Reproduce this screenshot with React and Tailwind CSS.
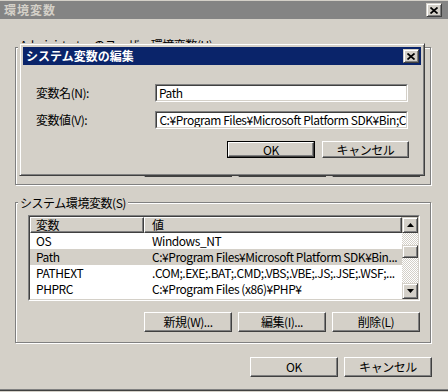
import React from "react";

function Raised({ className = "", children }) {
  return (
    <div
      className={`border border-t-white border-l-white border-r-[#404040] border-b-[#404040] shadow-[inset_-1px_-1px_0_#808080] bg-[#d4d0c8] flex items-center justify-center ${className}`}
    >
      {children}
    </div>
  );
}

function Button({ w = "w-[88px]", h = "h-[20px]", def = false, children }) {
  if (def) {
    return (
      <div className={`${w} ${h} border border-black flex`}>
        <Raised className="flex-1 text-[12px] leading-none">{children}</Raised>
      </div>
    );
  }
  return <Raised className={`${w} ${h} text-[12px] leading-none`}>{children}</Raised>;
}

function CloseGlyph() {
  return (
    <svg width="8" height="7" viewBox="0 0 8 7" className="block">
      <path d="M0.5 0.5L7.5 6.5M7.5 0.5L0.5 6.5" stroke="#000" strokeWidth="1.7" />
    </svg>
  );
}

function CloseBtn() {
  return (
    <div className="w-[16px] h-[14px] border border-t-[#d4d0c8] border-l-[#d4d0c8] border-r-[#404040] border-b-[#404040] shadow-[inset_1px_1px_0_#fff,inset_-1px_-1px_0_#808080] bg-[#d4d0c8] flex items-center justify-center">
      <CloseGlyph />
    </div>
  );
}

function ScrollBtn({ up }) {
  return (
    <div className="w-[16px] h-[16px] border border-t-[#d4d0c8] border-l-[#d4d0c8] border-r-[#404040] border-b-[#404040] shadow-[inset_1px_1px_0_#fff,inset_-1px_-1px_0_#808080] bg-[#d4d0c8] flex items-center justify-center">
      <svg width="7" height="4" viewBox="0 0 7 4" className="block">
        {up ? <path d="M3.5 0L7 4H0Z" fill="#000" /> : <path d="M0 0H7L3.5 4Z" fill="#000" />}
      </svg>
    </div>
  );
}

function Sunken({ className = "", inner = "", children }) {
  return (
    <div className={`border border-t-[#808080] border-l-[#808080] border-r-white border-b-white ${className}`}>
      <div className={`h-full border border-t-[#404040] border-l-[#404040] border-r-[#d4d0c8] border-b-[#d4d0c8] bg-white ${inner}`}>
        {children}
      </div>
    </div>
  );
}

const rows = [
  ["OS", "Windows_NT", false],
  ["Path", "C:¥Program Files¥Microsoft Platform SDK¥Bin...", true],
  ["PATHEXT", ".COM;.EXE;.BAT;.CMD;.VBS;.VBE;.JS;.JSE;.WSF;...", false],
  ["PHPRC", "C:¥Program Files (x86)¥PHP¥", false],
];

export default function App() {
  return (
    <div className="w-[448px] h-[392px] bg-[#d4d0c8] relative overflow-hidden font-['Noto_Sans_CJK_JP','Noto_Sans',sans-serif] text-[12px] tracking-[-0.45px] text-black">
      <div className="h-[391px] flex flex-col border-b border-b-[#404040] shadow-[inset_0_-1px_0_#808080]">
        {/* title bar */}
        <div className="mt-[1px] h-[18px] bg-[#848484] flex items-center justify-between pl-[4px] pr-[6px]">
          <span className="font-bold text-[#d4d0c8] text-[12px] leading-none tracking-[1px]">環境変数</span>
          <CloseBtn />
        </div>

        {/* user variables group (mostly hidden) */}
        <div className="ml-[15px] mt-[28px] w-[416px] h-[138px] relative border border-[#808080] shadow-[1px_1px_0_#fff,inset_1px_1px_0_#fff] flex flex-col justify-end pb-[7px]">
          <span className="absolute left-[2px] -top-[10px] px-[2px] bg-[#d4d0c8] leading-[14px] whitespace-nowrap">
            Administrator のユーザー環境変数(U)
          </span>
          <div className="ml-[12px] w-[392px] flex justify-end gap-[6px]">
            <Button>新規(N)...</Button>
            <Button>編集(E)...</Button>
            <Button>削除(D)</Button>
          </div>
        </div>

        {/* system variables group */}
        <div className="ml-[15px] mt-[17px] w-[416px] h-[141px] relative border border-[#808080] shadow-[1px_1px_0_#fff,inset_1px_1px_0_#fff] pl-[12px] pt-[12px]">
          <span className="absolute left-[2px] -top-[7px] px-[2px] bg-[#d4d0c8] leading-[14px] whitespace-nowrap">
            システム環境変数(S)
          </span>
          <Sunken className="w-[392px] h-[86px]" inner="flex">
            <div className="flex-1 overflow-hidden">
              <div className="flex h-[16px]">
                <div className="w-[114px] h-full border border-t-white border-l-white border-r-[#404040] border-b-[#404040] shadow-[inset_-1px_-1px_0_#808080] bg-[#d4d0c8] pl-[5px] flex items-center leading-none">
                  変数
                </div>
                <div className="flex-1 h-full border border-t-white border-l-white border-r-[#404040] border-b-[#404040] shadow-[inset_-1px_-1px_0_#808080] bg-[#d4d0c8] pl-[7px] flex items-center leading-none">
                  値
                </div>
              </div>
              {rows.map(([n, v, sel]) => (
                <div key={n} className={`flex h-[16px] leading-[16px] whitespace-nowrap ${sel ? "bg-[#d4d0c8]" : ""}`}>
                  <div className="w-[114px] pl-[6px]">{n}</div>
                  <div className="flex-1 pl-[8px] overflow-hidden">{v}</div>
                </div>
              ))}
            </div>
            <div className="w-[16px] flex flex-col">
              <ScrollBtn up />
              <div className="flex-1 bg-[repeating-conic-gradient(#d4d0c8_0%_25%,#ffffff_0%_50%)] bg-[length:2px_2px] pt-[12px]">
                <div className="h-[13px] border border-t-[#d4d0c8] border-l-[#d4d0c8] border-r-[#404040] border-b-[#404040] shadow-[inset_1px_1px_0_#fff,inset_-1px_-1px_0_#808080] bg-[#d4d0c8]" />
              </div>
              <ScrollBtn />
            </div>
          </Sunken>
          <div className="w-[392px] mt-[11px] flex justify-end gap-[6px]">
            <Button>新規(W)...</Button>
            <Button>編集(I)...</Button>
            <Button>削除(L)</Button>
          </div>
        </div>

        {/* bottom buttons */}
        <div className="ml-[15px] w-[417px] mt-[14px] flex justify-end gap-[6px]">
          <Button>OK</Button>
          <Button>キャンセル</Button>
        </div>
      </div>

      {/* edit dialog overlay */}
      <div className="absolute left-[19px] top-[43px] w-[406px] h-[133px] border border-t-[#d4d0c8] border-l-[#d4d0c8] border-r-[#404040] border-b-[#404040] shadow-[inset_1px_1px_0_#fff,inset_-1px_-1px_0_#808080] p-[3px] bg-[#d4d0c8] flex flex-col">
        <div className="h-[18px] bg-[#0a246a] flex items-center justify-between pl-[3px] pr-[2px]">
          <span className="text-white font-bold text-[12px] leading-none tracking-[0px]">システム変数の編集</span>
          <CloseBtn />
        </div>
        <div className="flex-1 pl-[13px] pr-[12px] pt-[19px] flex flex-col">
          <div className="flex items-center h-[18px]">
            <div className="w-[119px] leading-none">変数名(N):</div>
            <Sunken className="w-[253px] h-[18px]" inner="flex items-center pl-[2px] leading-none overflow-hidden">
              Path
            </Sunken>
          </div>
          <div className="flex items-center h-[18px] mt-[9px]">
            <div className="w-[119px] leading-none">変数値(V):</div>
            <Sunken className="w-[253px] h-[18px]" inner="flex items-center justify-end leading-none overflow-hidden whitespace-nowrap">
              <span className="shrink-0">C:¥Program Files¥Microsoft Platform SDK¥Bin;C</span>
            </Sunken>
          </div>
          <div className="mt-[12px] flex justify-end gap-[7px]">
            <Button def h="h-[17px]">OK</Button>
            <Button w="w-[87px]" h="h-[17px]">キャンセル</Button>
          </div>
        </div>
      </div>
    </div>
  );
}
